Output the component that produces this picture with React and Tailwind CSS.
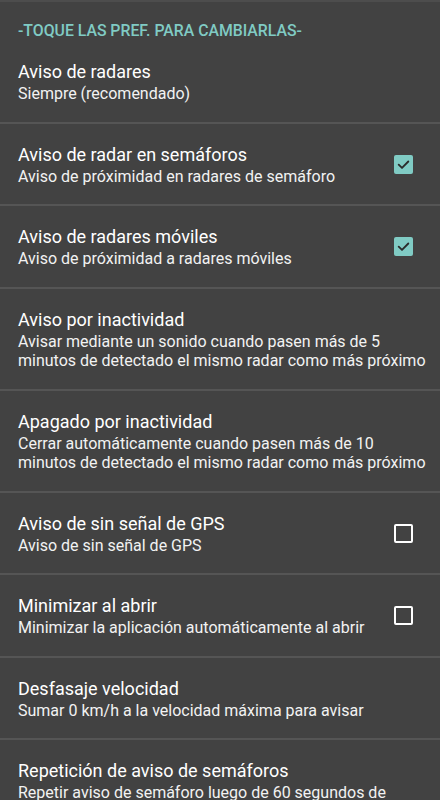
const prefs = [
    { title: 'Aviso de radares', desc: 'Siempre (recomendado)' },
    { title: 'Aviso de radar en semáforos', desc: 'Aviso de próximidad en radares de semáforo', check: true },
    { title: 'Aviso de radares móviles', desc: 'Aviso de próximidad a radares móviles', check: true },
    { title: 'Aviso por inactividad', desc: 'Avisar mediante un sonido cuando pasen más de 5 minutos de detectado el mismo radar como más próximo' },
    { title: 'Apagado por inactividad', desc: 'Cerrar automáticamente cuando pasen más de 10 minutos de detectado el mismo radar como más próximo' },
    { title: 'Aviso de sin señal de GPS', desc: 'Aviso de sin señal de GPS', check: false },
    { title: 'Minimizar al abrir', desc: 'Minimizar la aplicación automáticamente al abrir', check: false },
    { title: 'Desfasaje velocidad', desc: 'Sumar 0 km/h a la velocidad máxima para avisar' },
    { title: 'Repetición de aviso de semáforos', desc: 'Repetir aviso de semáforo luego de 60 segundos de detenido' },
];

function CheckBox({ checked }) {
    if (checked) {
        return (
            <div className="w-[19px] h-[19px] rounded-[2px] bg-[#80cbc4] flex items-center justify-center shrink-0">
                <svg width="15" height="15" viewBox="0 0 14 14" fill="none">
                    <path d="M2.5 7.2 L5.6 10.2 L11.5 4.2" stroke="#2b2b2b" strokeWidth="1.7" strokeLinecap="round" strokeLinejoin="round" />
                </svg>
            </div>
        );
    }
    return <div className="w-[19px] h-[19px] rounded-[2px] border-2 border-white shrink-0"></div>;
}

export default function App() {
    return (
        <div className="w-[440px] h-[800px] overflow-hidden bg-[#424242] border-t-2 border-[#4d4d4d]" style={{ fontFamily: 'Roboto, "Liberation Sans", sans-serif' }}>
            {/* Header */}
            <div className="pt-[19px] px-[18px] text-[15.8px] leading-[20px] font-medium text-[#80cbc4]">
                -TOQUE LAS PREF. PARA CAMBIARLAS-
            </div>

            {prefs.map((p, i) => (
                <div key={i} className={`flex items-center pl-[18px] ${p.check !== undefined ? 'pr-[27px]' : 'pr-[10px]'} pt-[19px] pb-[18px] ${i < prefs.length - 1 ? 'border-b-2 border-[#555555]' : ''}`}>
                    <div className="flex-1 min-w-0">
                        <p className="text-[18px] leading-[24px] text-white">{p.title}</p>
                        <p className="text-[16px] leading-[19.5px] text-[#f2f2f2]">{p.desc}</p>
                    </div>
                    {p.check !== undefined && (
                        <div className="ml-6">
                            <CheckBox checked={p.check} />
                        </div>
                    )}
                </div>
            ))}
        </div>
    );
}
